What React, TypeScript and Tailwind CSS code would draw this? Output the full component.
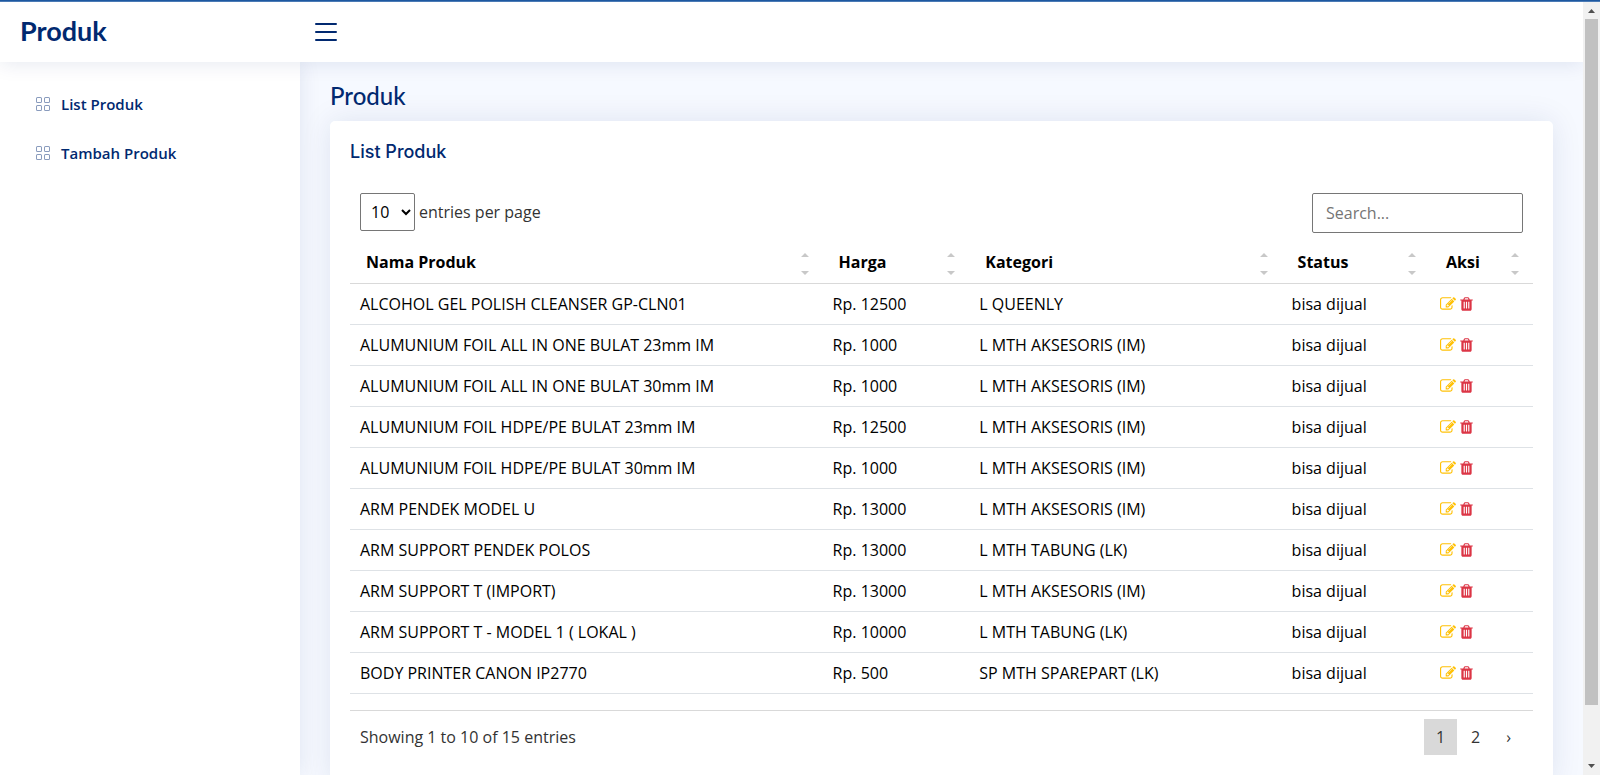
import { useState } from "react";
import { BsGrid, BsList } from "react-icons/bs";

type Product = { name: string; price: number; category: string };

const products: Product[] = [
  { name: "ALCOHOL GEL POLISH CLEANSER GP-CLN01", price: 12500, category: "L QUEENLY" },
  { name: "ALUMUNIUM FOIL ALL IN ONE BULAT 23mm IM", price: 1000, category: "L MTH AKSESORIS (IM)" },
  { name: "ALUMUNIUM FOIL ALL IN ONE BULAT 30mm IM", price: 1000, category: "L MTH AKSESORIS (IM)" },
  { name: "ALUMUNIUM FOIL HDPE/PE BULAT 23mm IM", price: 12500, category: "L MTH AKSESORIS (IM)" },
  { name: "ALUMUNIUM FOIL HDPE/PE BULAT 30mm IM", price: 1000, category: "L MTH AKSESORIS (IM)" },
  { name: "ARM PENDEK MODEL U", price: 13000, category: "L MTH AKSESORIS (IM)" },
  { name: "ARM SUPPORT PENDEK POLOS", price: 13000, category: "L MTH TABUNG (LK)" },
  { name: "ARM SUPPORT T (IMPORT)", price: 13000, category: "L MTH AKSESORIS (IM)" },
  { name: "ARM SUPPORT T - MODEL 1 ( LOKAL )", price: 10000, category: "L MTH TABUNG (LK)" },
  { name: "BODY PRINTER CANON IP2770", price: 500, category: "SP MTH SPAREPART (LK)" },
];

const columns = [
  { label: "Nama Produk", width: "w-[39.95%]" },
  { label: "Harga", width: "w-[12.4%]" },
  { label: "Kategori", width: "w-[26.4%]" },
  { label: "Status", width: "w-[12.55%]" },
  { label: "Aksi", width: "w-[8.7%]" },
];

function EditIcon() {
  return (
    <svg viewBox="0 0 1792 1792" className="h-4 w-4" fill="currentColor" aria-hidden="true">
      <path d="M888 1184l116-116-152-152-116 116v56h96v96h56zm440-720q-16-16-33 1l-350 350q-17 17-1 33t33-1l350-350q17-17 1-33zm80 594v190q0 119-84.5 203.5t-203.5 84.5h-832q-119 0-203.5-84.5t-84.5-203.5v-832q0-119 84.5-203.5t203.5-84.5h832q63 0 117 25 15 7 18 23 3 17-9 29l-49 49q-14 14-32 8-23-6-45-6h-832q-66 0-113 47t-47 113v832q0 66 47 113t113 47h832q66 0 113-47t47-113v-126q0-13 9-22l64-64q15-15 35-7t20 29zm-96-738l288 288-672 672h-288v-288zm444 132l-92 92-288-288 92-92q28-28 68-28t68 28l152 152q28 28 28 68t-28 68z" />
    </svg>
  );
}

function TrashIcon() {
  return (
    <svg viewBox="192 0 1408 1792" className="h-4 w-[13px]" fill="currentColor" aria-hidden="true">
      <path d="M704 1376v-704q0-14-9-23t-23-9h-64q-14 0-23 9t-9 23v704q0 14 9 23t23 9h64q14 0 23-9t9-23zm256 0v-704q0-14-9-23t-23-9h-64q-14 0-23 9t-9 23v704q0 14 9 23t23 9h64q14 0 23-9t9-23zm256 0v-704q0-14-9-23t-23-9h-64q-14 0-23 9t-9 23v704q0 14 9 23t23 9h64q14 0 23-9t9-23zm-544-992h448l-48-117q-7-9-17-11h-317q-10 2-17 11zm928 32v64q0 14-9 23t-23 9h-96v948q0 83-47 143.5t-113 60.5h-832q-66 0-113-58.5t-47-141.5v-952h-96q-14 0-23-9t-9-23v-64q0-14 9-23t23-9h309l70-167q15-37 54-63t79-26h320q40 0 79 26t54 63l70 167h309q14 0 23 9t9 23z" />
    </svg>
  );
}

function Header() {
  return (
    <header className="relative z-20 flex h-[60px] shrink-0 items-center bg-white px-5 shadow-[0_2px_20px_rgba(1,41,112,0.1)]">
      <a href="#" className="w-[280px] pb-[3px] font-[Lato,sans-serif] text-[27px] leading-8 font-bold text-[#012970]">
        Produk
      </a>
      <button type="button" aria-label="Toggle sidebar" className="pl-[10px] text-[#012970]">
        <BsList size={32} />
      </button>
    </header>
  );
}

function Sidebar() {
  return (
    <nav className="relative z-10 w-[300px] shrink-0 bg-white p-5 shadow-[0_0_20px_rgba(1,41,112,0.1)]">
      <ul className="flex flex-col gap-[5px]">
        {["List Produk", "Tambah Produk"].map((label) => (
          <li key={label}>
            <a href="#" className="flex h-11 items-center gap-[10px] px-[15px] text-[15px] font-semibold text-[#012970]">
              <BsGrid size={16} className="text-[#899bbd]" />
              {label}
            </a>
          </li>
        ))}
      </ul>
    </nav>
  );
}

function SortArrows() {
  return (
    <svg viewBox="0 -4 8 26" className="h-[26px] w-2 fill-[#c8c8c8]" aria-hidden="true">
      <path d="M0 4L4 0L8 4ZM0 18L4 22L8 18Z" />
    </svg>
  );
}

function ProductTable() {
  return (
    <table className="w-full table-fixed border-collapse text-black">
      <thead>
        <tr className="border-b border-[#d9d9d9]">
          {columns.map(({ label, width }) => (
            <th key={label} scope="col" className={`${width} px-[10px] py-2 text-left font-bold`}>
              <button type="button" className="flex w-full items-center justify-between pr-1 pl-[6px]">
                {label}
                <SortArrows />
              </button>
            </th>
          ))}
        </tr>
      </thead>
      <tbody>
        {products.map(({ name, price, category }) => (
          <tr key={name} className="border-b border-[#dee2e6]">
            <td className="px-[10px] py-2">{name}</td>
            <td className="px-[10px] py-2">Rp. {price}</td>
            <td className="px-[10px] py-2">{category}</td>
            <td className="px-[10px] py-2">bisa dijual</td>
            <td className="px-[10px] py-2">
              <div className="flex items-center gap-1">
                <a href="#" aria-label={`Edit ${name}`} className="text-[#ffc107]">
                  <EditIcon />
                </a>
                <a href="#" aria-label={`Hapus ${name}`} className="text-[#dc3545]">
                  <TrashIcon />
                </a>
              </div>
            </td>
          </tr>
        ))}
      </tbody>
    </table>
  );
}

function Pagination() {
  const [page, setPage] = useState("1");
  return (
    <nav aria-label="Pages" className="flex gap-[2px]">
      {["1", "2", "›"].map((label) => (
        <button
          key={label}
          type="button"
          onClick={() => label !== "›" && setPage(label)}
          className={label === page ? "h-9 bg-[#d9d9d9] px-3" : "h-9 px-3"}
        >
          {label}
        </button>
      ))}
    </nav>
  );
}

function ScrollTrack() {
  return (
    <div className="flex w-[17px] shrink-0 flex-col bg-[#f1f1f1] px-[2px]" aria-hidden="true">
      <svg viewBox="0 0 13 17" className="h-[17px] w-[13px] fill-[#505050]">
        <path d="M3 11L6.500 7L10 11Z" />
      </svg>
      <div className="flex-[686] bg-[#c1c1c1]" />
      <div className="flex-[53]" />
      <svg viewBox="0 0 13 17" className="h-[17px] w-[13px] fill-[#505050]">
        <path d="M3 6L6.500 10L10 6Z" />
      </svg>
    </div>
  );
}

export default function App() {
  return (
    <div className="flex h-screen flex-col overflow-hidden bg-[#f6f9ff] font-['Open_Sans',sans-serif] text-base text-[#333]">
      <div className="h-[2px] shrink-0 border-b border-[#4a7ab5] bg-[#1d58a0]" />
      <div className="flex min-h-0 flex-1">
        <div className="flex min-w-0 flex-1 flex-col overflow-hidden">
          <Header />
          <div className="flex min-h-0 flex-1">
            <Sidebar />
            <main className="min-w-0 flex-1 px-[30px] py-5">
              <h1 className="mb-3 font-[Lato,sans-serif] text-2xl leading-[27px] font-medium text-[#012970]">
                Produk
              </h1>
              <section className="rounded-[5px] bg-white px-5 pb-5 shadow-[0_0_30px_rgba(1,41,112,0.1)]">
                <h2 className="pt-5 pb-[22px] font-[Inter,sans-serif] text-lg leading-[22px] font-medium text-[#012970]">
                  List Produk
                </h2>
                <div className="flex items-start justify-between px-[10px] py-2">
                  <label className="flex items-center gap-1">
                    <select className="h-[38px] w-[55px] rounded-[2px] border border-[#767676] bg-white pl-[6px] text-black">
                      <option>10</option>
                      <option>15</option>
                      <option>25</option>
                    </select>
                    entries per page
                  </label>
                  <input
                    type="search"
                    aria-label="Search"
                    placeholder="Search..."
                    className="h-10 w-[211px] rounded-[2px] border border-[#767676] px-[13px] placeholder:text-[#757575]"
                  />
                </div>
                <ProductTable />
                <div className="mt-4 flex items-center justify-between border-t border-[#d9d9d9] px-[10px] py-2">
                  <p>Showing 1 to 10 of 15 entries</p>
                  <Pagination />
                </div>
              </section>
            </main>
          </div>
        </div>
        <ScrollTrack />
      </div>
    </div>
  );
}
